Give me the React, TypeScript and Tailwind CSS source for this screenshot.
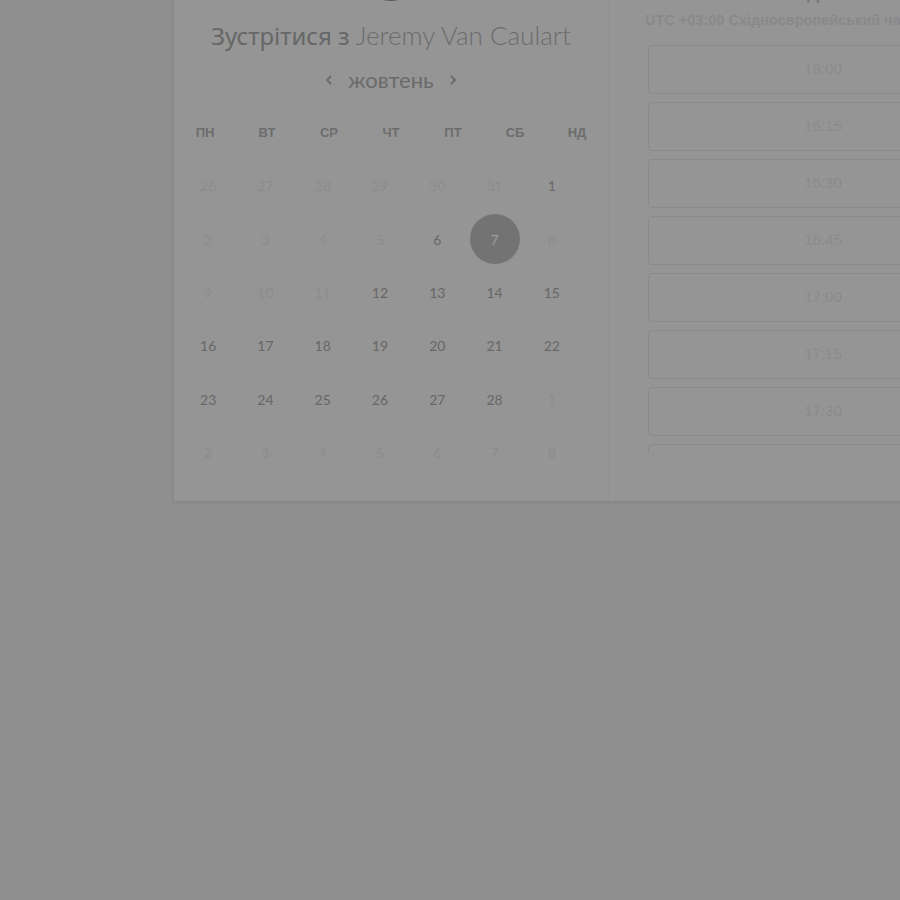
import React from 'react';

const weekDays = ['пн', 'вт', 'ср', 'чт', 'пт', 'сб', 'нд'];

type Day = { n: number; on?: boolean; sel?: boolean };

const days: Day[] = [
  { n: 26 }, { n: 27 }, { n: 28 }, { n: 29 }, { n: 30 }, { n: 31 }, { n: 1, on: true },
  { n: 2 }, { n: 3 }, { n: 4 }, { n: 5 }, { n: 6, on: true }, { n: 7, sel: true }, { n: 8 },
  { n: 9 }, { n: 10 }, { n: 11 }, { n: 12, on: true }, { n: 13, on: true }, { n: 14, on: true }, { n: 15, on: true },
  { n: 16, on: true }, { n: 17, on: true }, { n: 18, on: true }, { n: 19, on: true }, { n: 20, on: true }, { n: 21, on: true }, { n: 22, on: true },
  { n: 23, on: true }, { n: 24, on: true }, { n: 25, on: true }, { n: 26, on: true }, { n: 27, on: true }, { n: 28, on: true }, { n: 1 },
  { n: 2 }, { n: 3 }, { n: 4 }, { n: 5 }, { n: 6 }, { n: 7 }, { n: 8 },
];

const slots = ['16:00', '16:15', '16:30', '16:45', '17:00', '17:15', '17:30', '17:45'];

const Chevron = ({ dir }: { dir: 'l' | 'r' }) => (
  <svg width="8" height="12" viewBox="0 0 8 12" fill="none" stroke="#6a6a6a" strokeWidth="1.8" strokeLinecap="round" strokeLinejoin="round">
    {dir === 'l' ? <path d="M5.5 2.5 2 6l3.5 3.5" /> : <path d="M2.5 2.5 6 6 2.5 9.5" />}
  </svg>
);

export default function App() {
  return (
    <div className="h-[900px] w-[900px] overflow-hidden bg-[#8f8f8f] font-['Lato',sans-serif]">
      <div className="ml-[174px] -mt-[100px] flex w-[900px] bg-[#959595] shadow-[0_1px_4px_rgba(0,0,0,0.12)]">
        {/* Calendar column */}
        <div className="flex w-[434px] shrink-0 flex-col items-center pt-[37px] pb-[22px]">
          <div className="h-16 w-16 rounded-full bg-[#5c5c5c]" />
          <h1 className="mt-[19px] flex h-[30px] items-baseline gap-[6px] whitespace-nowrap leading-[30px] text-[#676767]">
            <span className="font-['Noto_Sans',sans-serif] text-[24px]">Зустрітися з</span>
            <span className="text-[26px] font-light text-[#6c6c6c]">Jeremy Van Caulart</span>
          </h1>
          <div className="mt-[16px] flex h-[28px] items-center gap-[15px]">
            <Chevron dir="l" />
            <span className="text-[22px] leading-[28px] text-[#6a6a6a]">жовтень</span>
            <Chevron dir="r" />
          </div>
          <div className="mt-[29px] grid w-[434px] grid-cols-7 font-['Liberation_Sans',sans-serif]">
            {weekDays.map((d) => (
              <div key={d} className="h-5 text-center text-[13px] font-bold uppercase leading-5 text-[#6d6d6d]">
                {d}
              </div>
            ))}
          </div>
          <div className="mt-[16px] mr-[22px] grid w-[401px] grid-cols-7">
            {days.map((d, i) => (
              <div key={i} className="flex h-[53.4px] items-center justify-center">
                {d.sel ? (
                  <div className="flex h-[50px] w-[50px] items-center justify-center rounded-full bg-[#737373] text-[14px] text-[#9c9c9c]">
                    {d.n}
                  </div>
                ) : (
                  <span className={`text-[14px] ${d.on ? 'text-[#676767]' : 'text-[#8c8c8c]'}`}>{d.n}</span>
                )}
              </div>
            ))}
          </div>
        </div>

        {/* Time column */}
        <div className="flex flex-1 flex-col border-l border-[#909090] pt-[84px] pl-[36px]">
          <div className="h-[22px] pl-[162px] font-['Liberation_Sans',sans-serif] text-[17px] font-bold leading-[22px] text-[#7a7a7a]">
            День
          </div>
          <div className="mt-[6px] whitespace-nowrap font-['Liberation_Sans',sans-serif] text-[14.5px] font-bold leading-4 text-[#898989]">
            UTC +03:00 Східноєвропейський час
          </div>
          <div className="mt-[17px] ml-[3px] flex h-[408px] w-[350px] flex-col gap-2 overflow-hidden">
            {slots.map((s) => (
              <div
                key={s}
                className="flex h-[49px] shrink-0 items-center justify-center rounded-[4px] border border-[#8a8a8a] font-['Liberation_Sans',sans-serif] text-[15px] text-[#8b8b8b]"
              >
                {s}
              </div>
            ))}
          </div>
        </div>
      </div>
    </div>
  );
}
